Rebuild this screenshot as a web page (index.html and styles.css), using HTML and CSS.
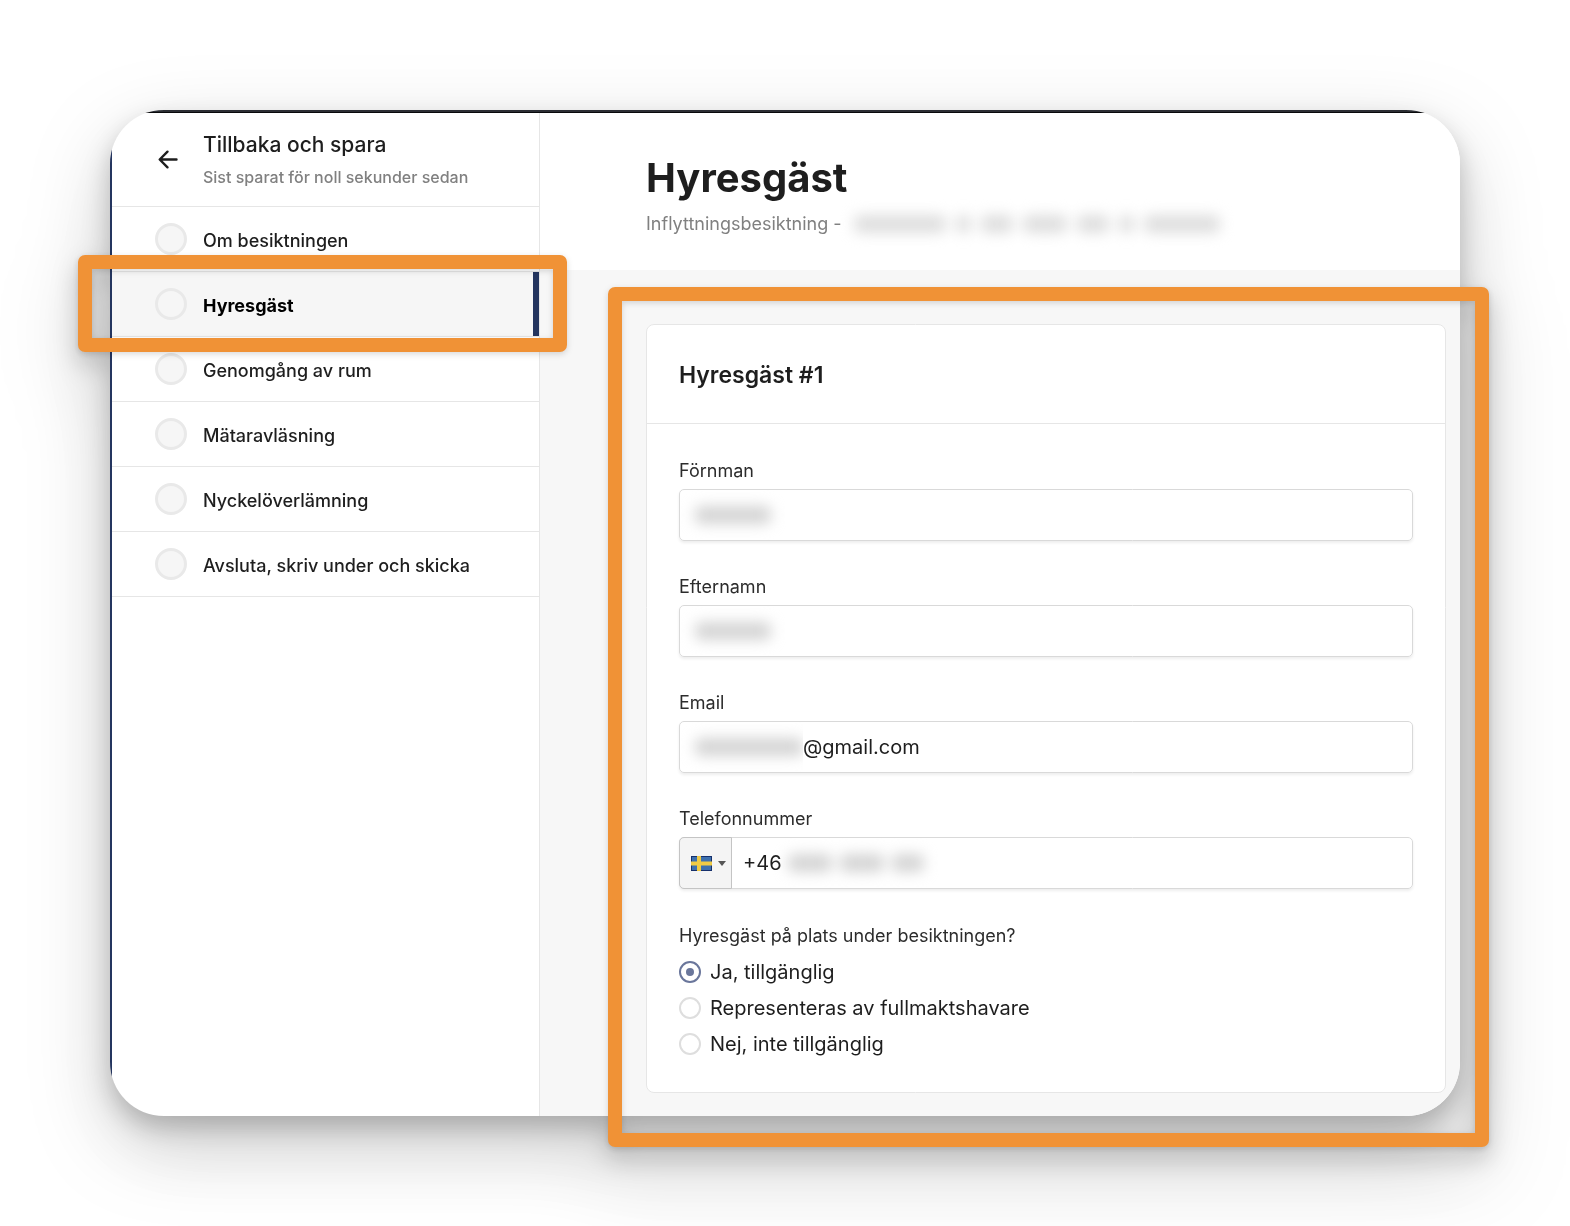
FILE: index.html
```html
<!DOCTYPE html>
<html lang="sv">
<head>
<meta charset="utf-8">
<meta name="viewport" content="width=device-width, initial-scale=1">
<title>Hyresgäst</title>
<link rel="stylesheet" href="styles.css">
</head>
<body>
<div class="stage">
  <div class="window">
    <aside class="sidebar">
      <a class="back" href="#">
        <svg class="back-icon" viewBox="0 0 20 20" aria-hidden="true"><path d="M18.500 9.500H2M9.500 1.700 1.700 9.500l7.800 7.800"/></svg>
        <span class="back-text">
          <span class="back-title">Tillbaka och spara</span>
          <span class="back-note">Sist sparat för noll sekunder sedan</span>
        </span>
      </a>
      <nav class="steps">
        <a class="step" href="#"><span class="dot"></span><span class="step-name">Om besiktningen</span></a>
        <a class="step current" href="#" aria-current="step"><span class="dot"></span><span class="step-name">Hyresgäst</span></a>
        <a class="step" href="#"><span class="dot"></span><span class="step-name">Genomgång av rum</span></a>
        <a class="step" href="#"><span class="dot"></span><span class="step-name">Mätaravläsning</span></a>
        <a class="step" href="#"><span class="dot"></span><span class="step-name">Nyckelöverlämning</span></a>
        <a class="step" href="#"><span class="dot"></span><span class="step-name">Avsluta, skriv under och skicka</span></a>
      </nav>
    </aside>
    <main class="main">
      <header class="page-head">
        <h1>Hyresgäst</h1>
        <p class="subtitle">Inflyttningsbesiktning -
          <span class="hidden-text address" aria-hidden="true"><i class="w-xl"></i><i class="w-xs"></i><i class="w-s"></i><i class="w-m"></i><i class="w-s"></i><i class="w-xs"></i><i class="w-l"></i></span>
        </p>
      </header>
      <form class="card">
        <h2>Hyresgäst #1</h2>
        <div class="fields">
          <div class="field">
            <label for="first">Förnman</label>
            <div class="control">
              <span class="hidden-text" aria-hidden="true"><i class="w-l"></i></span>
              <input id="first" type="text">
            </div>
          </div>
          <div class="field">
            <label for="last">Efternamn</label>
            <div class="control">
              <span class="hidden-text" aria-hidden="true"><i class="w-l"></i></span>
              <input id="last" type="text">
            </div>
          </div>
          <div class="field">
            <label for="email">Email</label>
            <div class="control">
              <span class="hidden-text mail-name" aria-hidden="true"><i class="w-xxl"></i></span>
              <input id="email" type="text" value="@gmail.com">
            </div>
          </div>
          <div class="field">
            <label for="phone">Telefonnummer</label>
            <div class="control phone">
              <button class="country" type="button" aria-label="Sverige">
                <svg class="flag" viewBox="0 0 21 15" aria-hidden="true">
                  <rect width="21" height="15" fill="#16306c"/>
                  <rect x="1" y="1" width="19" height="13" fill="#3d70ae"/>
                  <path d="M0 5.500h21v4H0zM6 0h4v15H6z" fill="#f0cb45"/>
                </svg>
                <span class="caret"></span>
              </button>
              <input id="phone" type="tel" value="+46">
              <span class="hidden-text" aria-hidden="true"><i class="w-m"></i><i class="w-m"></i><i class="w-s"></i></span>
            </div>
          </div>
          <fieldset class="choices">
            <legend>Hyresgäst på plats under besiktningen?</legend>
            <label><input type="radio" name="presence" checked>Ja, tillgänglig</label>
            <label><input type="radio" name="presence">Representeras av fullmaktshavare</label>
            <label><input type="radio" name="presence">Nej, inte tillgänglig</label>
          </fieldset>
        </div>
      </form>
    </main>
  </div>
  <div class="marker marker-step"></div>
  <div class="marker marker-form"></div>
</div>
</body>
</html>
```
FILE: styles.css
```css
* {
  box-sizing: border-box;
}

body {
  margin: 0;
  padding: 110px;
  background: #fff;
  color: #1e1e1e;
  font-family: Inter, "Liberation Sans", sans-serif;
  font-size: 20px;
}

.stage {
  position: relative;
  filter: drop-shadow(0 28px 40px rgba(0, 0, 0, 0.18)) drop-shadow(0 12px 12px rgba(0, 0, 0, 0.22));
}

.window {
  display: grid;
  grid-template-columns: 428px minmax(0, 1fr);
  overflow: hidden;
  border-radius: 54px;
  background:
    linear-gradient(#2b2d33 2px, #08090b 2px, #08090b 3px, transparent 3px),
    linear-gradient(90deg, #24355f 2px, #fff 2px);
  padding: 3px 0 0 2px;
}

.sidebar {
  border-right: 1px solid #e6e6e6;
}

.back {
  display: flex;
  align-items: center;
  gap: 25px;
  height: 94px;
  padding: 0 46px;
  border-bottom: 1px solid #e6e6e6;
  color: inherit;
  text-decoration: none;
}

.back-icon {
  flex: none;
  width: 20px;
  height: 20px;
  fill: none;
  stroke: #1e1e1e;
  stroke-width: 2.4;
  stroke-linecap: round;
  stroke-linejoin: round;
}

.back-text {
  display: grid;
  gap: 6px;
  white-space: nowrap;
}

.back-title {
  font-size: 21px;
  font-weight: 500;
  line-height: 28px;
}

.back-note {
  color: #808080;
  font-size: 16px;
  font-weight: 500;
  line-height: 24px;
}

.step {
  display: flex;
  align-items: center;
  gap: 16px;
  height: 65px;
  padding: 0 43px;
  border-bottom: 1px solid #e6e6e6;
  color: #1e1e1e;
  font-size: 18px;
  font-weight: 500;
  text-decoration: none;
  white-space: nowrap;
}

.step.current {
  background: #f6f6f6;
  box-shadow: inset -6px 0 #24355f;
  color: #000;
  font-weight: 700;
}

.step-name {
  padding-top: 2px;
}

.dot {
  width: 32px;
  height: 32px;
  border: 3px solid #e9e9e9;
  border-radius: 50%;
  background: #f6f6f6;
}

.main {
  background: #f7f7f7;
}

.page-head {
  height: 157px;
  padding: 38px 106px 0;
  background: #fff;
}

h1 {
  margin: 0;
  font-size: 40px;
  font-weight: 700;
  line-height: 54px;
}

.subtitle {
  display: flex;
  align-items: center;
  gap: 12px;
  margin: 6px 0 0;
  color: #808080;
  font-size: 18px;
  line-height: 26px;
  white-space: nowrap;
}

.hidden-text {
  display: inline-flex;
  gap: 8px;
  filter: blur(7px);
}

.hidden-text i {
  height: 18px;
  border-radius: 6px;
  background: #d4d4d4;
}

.address {
  gap: 10px;
}

.address i {
  background: #dedede;
}

.w-xs { width: 15px; }
.w-s { width: 32px; }
.w-m { width: 44px; }
.w-l { width: 76px; }
.w-xl { width: 92px; }
.w-xxl { width: 108px; }

.card {
  margin: 54px 14px 23px 106px;
  border: 1px solid #e6e6e6;
  border-radius: 8px;
  background: #fff;
}

h2 {
  margin: 0;
  padding: 33px 32px 31px;
  border-bottom: 1px solid #e6e6e6;
  font-size: 23px;
  font-weight: 600;
  line-height: 34px;
}

.fields {
  display: grid;
  gap: 32px;
  padding: 33px 32px 30px;
}

.field {
  display: grid;
  gap: 4px;
}

.field > label,
legend {
  color: #2c2c2c;
  font-size: 18px;
  line-height: 28px;
}

.control {
  display: flex;
  align-items: center;
  height: 52px;
  border: 1px solid #d9d9d9;
  border-radius: 5px;
  box-shadow: 0 2px 3px rgba(0, 0, 0, 0.07);
  padding-left: 15px;
}

.control input {
  flex: 1;
  min-width: 0;
  border: 0;
  padding: 0;
  outline: 0;
  background: none;
  color: #1e1e1e;
  font: inherit;
}

.mail-name {
  clip-path: inset(-16px 0 -16px -16px);
}

.control.phone {
  padding: 0;
}

.control.phone input {
  flex: none;
  width: 56px;
  padding-left: 11px;
}

.country {
  display: flex;
  align-items: center;
  gap: 6px;
  align-self: stretch;
  width: 53px;
  margin: -1px 0 -1px -1px;
  padding: 0 0 0 11px;
  border: 1px solid #c4c4c4;
  border-radius: 5px 0 0 5px;
  background: #f4f4f4;
}

.flag {
  width: 21px;
  height: 15px;
}

.caret {
  border: 4px solid transparent;
  border-top: 5px solid #555;
  border-bottom: 0;
}

.choices {
  display: grid;
  margin: 0;
  border: 0;
  padding: 0;
}

legend {
  padding: 1px 0 0;
  margin-bottom: 4px;
}

.choices label {
  display: flex;
  align-items: center;
  gap: 9px;
  line-height: 36px;
}

.choices input {
  display: grid;
  place-items: center;
  appearance: none;
  width: 22px;
  height: 22px;
  margin: 0;
  border: 2px solid #dedede;
  border-radius: 50%;
}

.choices input:checked {
  border-color: #6a769b;
}

.choices input:checked::before {
  content: "";
  width: 8px;
  height: 8px;
  border-radius: 50%;
  background: #6a769b;
}

.marker {
  position: absolute;
  border: 14px solid #f09236;
  border-radius: 7px;
  filter: drop-shadow(0 2px 3px rgba(0, 0, 0, 0.15));
  pointer-events: none;
}

.marker-step {
  top: 145px;
  left: -32px;
  width: 489px;
  height: 97px;
}

.marker-form {
  top: 177px;
  right: -29px;
  bottom: -31px;
  left: 498px;
}
```
